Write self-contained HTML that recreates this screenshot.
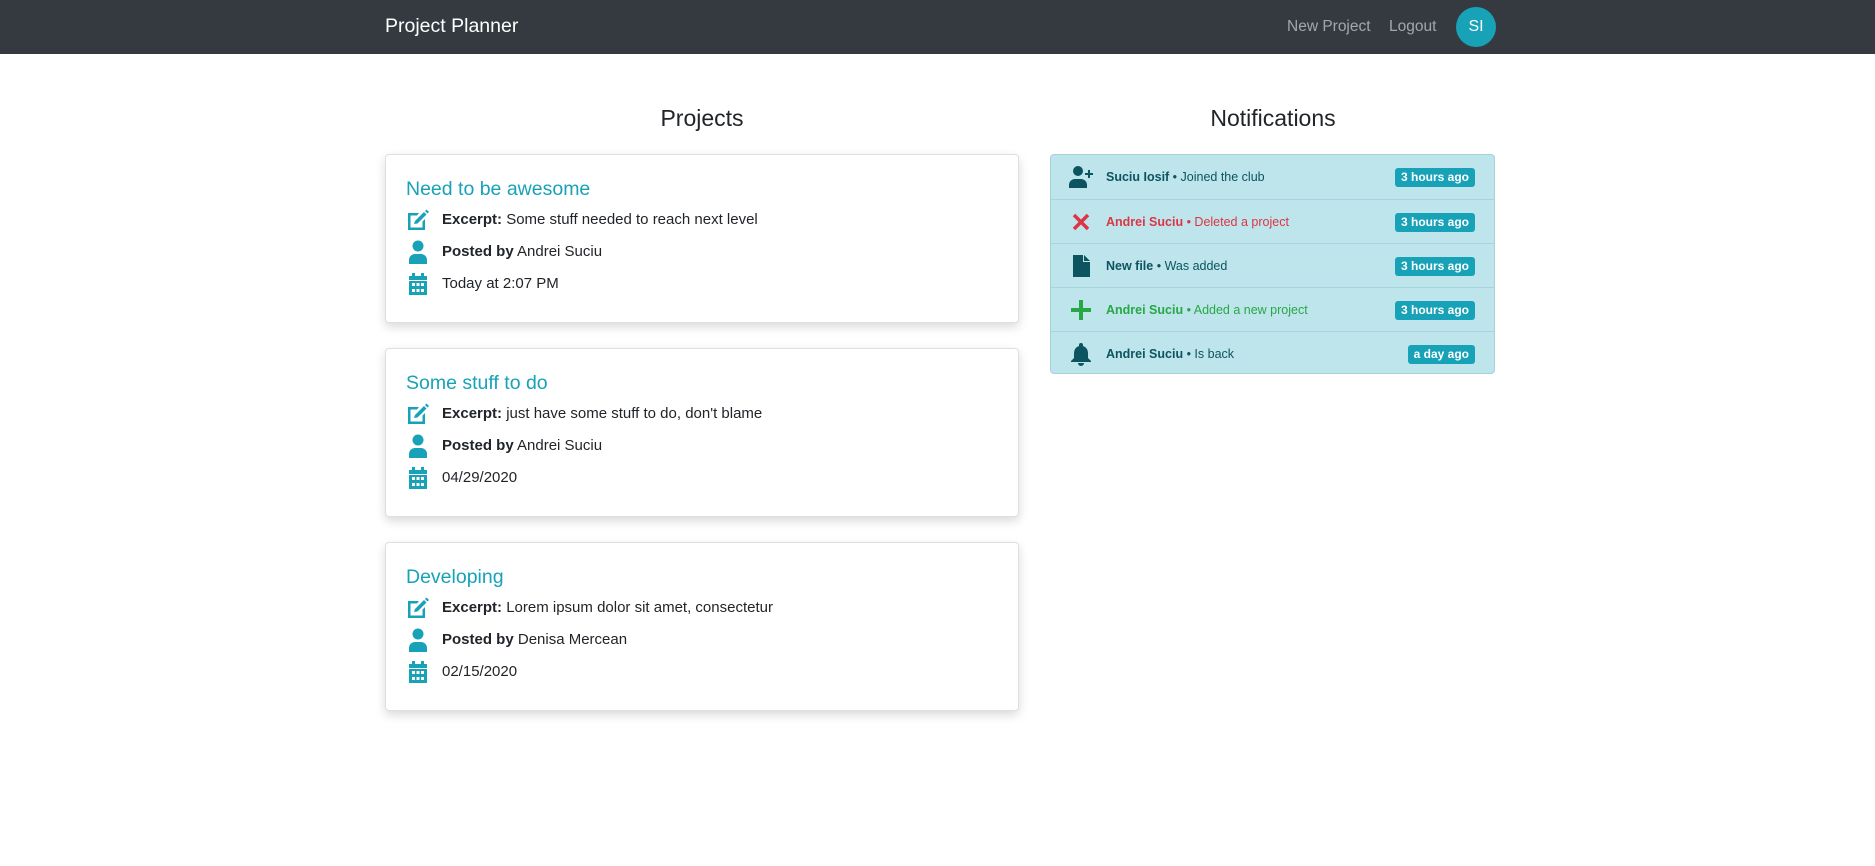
<!DOCTYPE html>
<html><head><meta charset="utf-8"><style>
*{box-sizing:border-box;margin:0;padding:0}
body{width:1875px;height:866px;background:#fff;font-family:"Liberation Sans",sans-serif;color:#212529;overflow:hidden;position:relative}
.nav{position:absolute;left:0;top:0;width:1875px;height:54px;background:#343a40}
.brand{position:absolute;left:385px;top:15px;font-size:19.5px;color:#fff}
.nl{position:absolute;top:18px;font-size:15.5px;color:rgba(255,255,255,.55)}
.av{position:absolute;left:1456px;top:7px;width:40px;height:40px;border-radius:50%;background:#17a2b8;color:#fff;font-size:16px;text-align:center;line-height:40px}
h2{position:absolute;font-size:23px;font-weight:500;top:105px;transform:translateX(-50%);white-space:nowrap}
.card{position:absolute;left:385px;width:634px;height:169px;border:1px solid rgba(0,0,0,.125);border-radius:4px;box-shadow:0 4px 10px rgba(0,0,0,.15);background:#fff}
.card .t{position:absolute;left:20px;top:23px;font-size:19.5px;color:#17a2b8}
.row{position:absolute;left:20px;font-size:15px;height:24px;line-height:24px}
.row svg{position:absolute;left:0;top:0}
.row span{position:absolute;left:36px;white-space:nowrap}
.nf{position:absolute;left:1050px;top:154px;width:445px;height:220px;background:#bee5eb;border:1px solid #a5d3dc;border-radius:4px}
.ni{position:absolute;left:0;width:443px;height:44px;border-top:1px solid #a6d5dd;font-size:12.5px;color:#0c5460;line-height:44px}
.ni:first-child{border-top:none}
.ni .ic{position:absolute;left:18px;top:10px;width:24px;height:24px}
.ni .tx{position:absolute;left:55px}
.badge{position:absolute;right:19px;top:13px;height:19px;line-height:19px;background:#17a2b8;color:#fff;font-size:12px;font-weight:bold;padding:0 6px;border-radius:3px}
</style></head><body>
<div class="nav"><div class="brand">Project Planner</div>
<div class="nl" style="left:1287px">New Project</div><div class="nl" style="left:1389px">Logout</div>
<div class="av">SI</div></div>
<h2 style="left:702px">Projects</h2>
<h2 style="left:1273px">Notifications</h2>

<div class="card" style="top:154px"><div class="t">Need to be awesome</div>
<div class="row" style="top:53px"><svg width="24" height="24" viewBox="0 0 24 24"><path d="M2 5h11l-2 2.5H4.5v12h12v-6l2.5-2.5V22H2z" fill="#17a2b8"/><path d="M9 13l9-9 2.5 2.5-9 9L8 16z" fill="#17a2b8"/><path d="M19 3l1.5-1.5 2.5 2.5L21.5 5.5z" fill="#17a2b8"/></svg><span><b>Excerpt:</b> Some stuff needed to reach next level</span></div>
<div class="row" style="top:85px"><svg width="24" height="24" viewBox="0 0 24 24"><circle cx="12" cy="6" r="5.5" fill="#17a2b8"/><path d="M3 24v-4a6 6 0 0 1 6-6h6a6 6 0 0 1 6 6v4z" fill="#17a2b8"/></svg><span><b>Posted by</b> Andrei Suciu</span></div>
<div class="row" style="top:117px"><svg width="24" height="24" viewBox="0 0 24 24"><path d="M3 4h18v4H3z M6 1h3v4H6z M15 1h3v4h-3z" fill="#17a2b8"/><path d="M3 9h18v14H3z" fill="#17a2b8"/><g fill="#fff"><rect x="6" y="11" width="3" height="3"/><rect x="10.5" y="11" width="3" height="3"/><rect x="15" y="11" width="3" height="3"/><rect x="6" y="17" width="3" height="3"/><rect x="10.5" y="17" width="3" height="3"/><rect x="15" y="17" width="3" height="3"/></g></svg><span>Today at 2:07 PM</span></div></div>

<div class="card" style="top:348px"><div class="t">Some stuff to do</div>
<div class="row" style="top:53px"><svg width="24" height="24" viewBox="0 0 24 24"><path d="M2 5h11l-2 2.5H4.5v12h12v-6l2.5-2.5V22H2z" fill="#17a2b8"/><path d="M9 13l9-9 2.5 2.5-9 9L8 16z" fill="#17a2b8"/><path d="M19 3l1.5-1.5 2.5 2.5L21.5 5.5z" fill="#17a2b8"/></svg><span><b>Excerpt:</b> just have some stuff to do, don't blame</span></div>
<div class="row" style="top:85px"><svg width="24" height="24" viewBox="0 0 24 24"><circle cx="12" cy="6" r="5.5" fill="#17a2b8"/><path d="M3 24v-4a6 6 0 0 1 6-6h6a6 6 0 0 1 6 6v4z" fill="#17a2b8"/></svg><span><b>Posted by</b> Andrei Suciu</span></div>
<div class="row" style="top:117px"><svg width="24" height="24" viewBox="0 0 24 24"><path d="M3 4h18v4H3z M6 1h3v4H6z M15 1h3v4h-3z" fill="#17a2b8"/><path d="M3 9h18v14H3z" fill="#17a2b8"/><g fill="#fff"><rect x="6" y="11" width="3" height="3"/><rect x="10.5" y="11" width="3" height="3"/><rect x="15" y="11" width="3" height="3"/><rect x="6" y="17" width="3" height="3"/><rect x="10.5" y="17" width="3" height="3"/><rect x="15" y="17" width="3" height="3"/></g></svg><span>04/29/2020</span></div></div>

<div class="card" style="top:542px"><div class="t">Developing</div>
<div class="row" style="top:53px"><svg width="24" height="24" viewBox="0 0 24 24"><path d="M2 5h11l-2 2.5H4.5v12h12v-6l2.5-2.5V22H2z" fill="#17a2b8"/><path d="M9 13l9-9 2.5 2.5-9 9L8 16z" fill="#17a2b8"/><path d="M19 3l1.5-1.5 2.5 2.5L21.5 5.5z" fill="#17a2b8"/></svg><span><b>Excerpt:</b> Lorem ipsum dolor sit amet, consectetur</span></div>
<div class="row" style="top:85px"><svg width="24" height="24" viewBox="0 0 24 24"><circle cx="12" cy="6" r="5.5" fill="#17a2b8"/><path d="M3 24v-4a6 6 0 0 1 6-6h6a6 6 0 0 1 6 6v4z" fill="#17a2b8"/></svg><span><b>Posted by</b> Denisa Mercean</span></div>
<div class="row" style="top:117px"><svg width="24" height="24" viewBox="0 0 24 24"><path d="M3 4h18v4H3z M6 1h3v4H6z M15 1h3v4h-3z" fill="#17a2b8"/><path d="M3 9h18v14H3z" fill="#17a2b8"/><g fill="#fff"><rect x="6" y="11" width="3" height="3"/><rect x="10.5" y="11" width="3" height="3"/><rect x="15" y="11" width="3" height="3"/><rect x="6" y="17" width="3" height="3"/><rect x="10.5" y="17" width="3" height="3"/><rect x="15" y="17" width="3" height="3"/></g></svg><span>02/15/2020</span></div></div>

<div class="nf">
<div class="ni" style="top:0"><svg class="ic" viewBox="0 0 24 24"><circle cx="9" cy="6" r="5" fill="#0c5460"/><path d="M0 23v-3a6 6 0 0 1 6-6h6a6 6 0 0 1 6 6v3z" fill="#0c5460"/><path d="M19 5h2v3h3v2h-3v3h-2v-3h-3V8h3z" fill="#0c5460"/></svg><span class="tx"><b>Suciu Iosif</b> • Joined the club</span><span class="badge">3 hours ago</span></div>
<div class="ni" style="top:44px;color:#dc3545"><svg class="ic" viewBox="0 0 24 24"><path d="M5 5l14 14M19 5L5 19" stroke="#dc3545" stroke-width="3.5"/></svg><span class="tx"><b>Andrei Suciu</b> • Deleted a project</span><span class="badge">3 hours ago</span></div>
<div class="ni" style="top:88px"><svg class="ic" viewBox="0 0 24 24"><path d="M4 1h10v7h7v15H4z" fill="#0c5460"/><path d="M15 1l6 6h-6z" fill="#0c5460"/></svg><span class="tx"><b>New file</b> • Was added</span><span class="badge">3 hours ago</span></div>
<div class="ni" style="top:132px;color:#28a745"><svg class="ic" viewBox="0 0 24 24"><path d="M12 2v20M2 12h20" stroke="#28a745" stroke-width="4"/></svg><span class="tx"><b>Andrei Suciu</b> • Added a new project</span><span class="badge">3 hours ago</span></div>
<div class="ni" style="top:176px"><svg class="ic" viewBox="0 0 24 24"><path d="M12 1a2 2 0 0 1 2 2v1a7 7 0 0 1 5 7v5l3 3v1H2v-1l3-3v-5a7 7 0 0 1 5-7V3a2 2 0 0 1 2-2z" fill="#0c5460"/><path d="M9 21h6a3 3 0 0 1-6 0z" fill="#0c5460"/></svg><span class="tx"><b>Andrei Suciu</b> • Is back</span><span class="badge">a day ago</span></div>
</div>
</body></html>
